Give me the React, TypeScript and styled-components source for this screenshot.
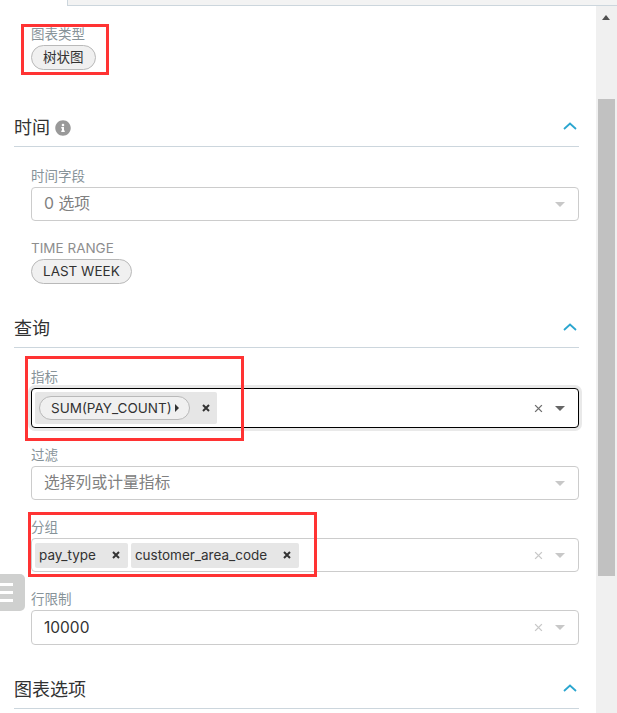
import * as React from 'react';
import styled, { createGlobalStyle } from 'styled-components';
import { FaInfoCircle } from 'react-icons/fa';

const GlobalStyle = createGlobalStyle`
    html, body {
        margin: 0;
        height: 100%;
        background: #fff;
        overflow: hidden;
    }
    body {
        font-family: Inter, "Noto Sans CJK SC", sans-serif;
        color: #323232;
    }
`;

const Cross = ({ size = 8, width = 2 }: { size?: number; width?: number }): JSX.Element => <svg width={size} height={size} viewBox="0 0 8 8">
    <path d="M1 1 L7 7 M7 1 L1 7" stroke="currentColor" strokeWidth={width} fill="none" />
</svg>;

const Section = ({ title, info, children }: { title: string; info?: boolean; children?: React.ReactNode }): JSX.Element => <SectionBlock>
    <SectionHead>
        <SectionTitle>
            {title}
            {info && <InfoIcon><FaInfoCircle size={16} /></InfoIcon>}
        </SectionTitle>
        <Chevron width="14" height="8" viewBox="0 0 14 8">
            <path d="M1 7 L7 1.5 L13 7" stroke="#2ba6cf" strokeWidth="1.8" fill="none" />
        </Chevron>
    </SectionHead>
    {children && <Controls>{children}</Controls>}
</SectionBlock>;

const SelectIndicators = ({ focused, clearable }: { focused?: boolean; clearable?: boolean }): JSX.Element => <Indicators>
    {clearable && <ClearIcon $focused={focused}><Cross size={9} width={1.2} /></ClearIcon>}
    <Caret $focused={focused} />
</Indicators>;

export default function App(): JSX.Element {
    return <Page>
        <GlobalStyle />
        <TopTab />
        <Body>
            <Panel>
                <ChartType>
                    <Label>图表类型</Label>
                    <Pill>树状图</Pill>
                    <Highlight $left={-10} $top={-1} $width={88} $height={51} />
                </ChartType>
                <Section title="时间" info>
                    <Field>
                        <Label>时间字段</Label>
                        <Select>
                            <Placeholder>0 选项</Placeholder>
                            <SelectIndicators />
                        </Select>
                    </Field>
                    <Field>
                        <Label $muted>TIME RANGE</Label>
                        <Pill>LAST WEEK</Pill>
                    </Field>
                </Section>
                <Section title="查询">
                    <Field>
                        <Label>指标</Label>
                        <Select $focused>
                            <Tag $tall>
                                <MetricPill>SUM(PAY_COUNT)<MetricArrow /></MetricPill>
                                <TagRemove $tight><Cross /></TagRemove>
                            </Tag>
                            <SelectIndicators focused clearable />
                        </Select>
                        <Highlight $left={-6} $top={-12} $width={219} $height={85} />
                    </Field>
                    <Field>
                        <Label>过滤</Label>
                        <Select>
                            <Placeholder>选择列或计量指标</Placeholder>
                            <SelectIndicators />
                        </Select>
                    </Field>
                    <Field>
                        <Label>分组</Label>
                        <Select>
                            <Tag>pay_type<TagRemove><Cross /></TagRemove></Tag>
                            <Tag>customer_area_code<TagRemove><Cross /></TagRemove></Tag>
                            <SelectIndicators clearable />
                        </Select>
                        <Highlight $left={-3} $top={-6} $width={289} $height={65} />
                    </Field>
                    <Field>
                        <Label>行限制</Label>
                        <Select $tall>
                            <Value>10000</Value>
                            <SelectIndicators clearable />
                        </Select>
                    </Field>
                </Section>
                <Section title="图表选项" />
                <MenuToggle>
                    <span /><span /><span />
                </MenuToggle>
            </Panel>
            <Scrollbar>
                <ScrollUp />
                <ScrollThumb />
            </Scrollbar>
        </Body>
    </Page>;
}

const Page = styled.div`
    display: flex;
    flex-direction: column;
    width: 617px;
    height: 713px;
    overflow: hidden;
`;

const TopTab = styled.div`
    flex: none;
    height: 5px;
    margin-left: 67px;
    background: #f3f3f3;
    border-left: 1px solid #ccd6dd;
    border-bottom: 1px solid #ccd6dd;
`;

const Body = styled.div`
    display: flex;
    flex: 1;
    min-height: 0;
`;

const Panel = styled.div`
    position: relative;
    width: 596px;
    flex: none;
`;

const Scrollbar = styled.div`
    width: 21px;
    flex: none;
    background: #f0f0f0;
    padding-left: 2px;
    box-sizing: border-box;
`;

const ScrollUp = styled.div`
    width: 0;
    height: 0;
    margin: 9px 0 0 4px;
    border-left: 4.5px solid transparent;
    border-right: 4.5px solid transparent;
    border-bottom: 5px solid #505050;
`;

const ScrollThumb = styled.div`
    width: 17px;
    height: 477px;
    margin-top: 79px;
    background: #c1c1c1;
`;

const ChartType = styled.div`
    position: relative;
    width: 200px;
    margin: 19px 0 0 31px;
    padding-bottom: 13px;
    display: flex;
    flex-direction: column;
`;

const SectionBlock = styled.div`
    margin: 27px 17px 0 14px;
`;

const SectionHead = styled.div`
    display: flex;
    align-items: center;
    justify-content: space-between;
    height: 36px;
    margin-top: -1px;
    padding: 0 2px 1px 0;
    border-bottom: 1px solid #ccd6dd;
`;

const SectionTitle = styled.div`
    display: flex;
    align-items: center;
    padding-top: 2px;
    font-size: 18px;
    line-height: 26px;
    color: #323232;
`;

const Chevron = styled.svg`
    margin-bottom: 2px;
`;

const InfoIcon = styled.span`
    display: flex;
    margin-left: 5px;
    color: #999;
`;

const Controls = styled.div`
    display: flex;
    flex-direction: column;
    gap: 18px;
    padding: 20px 0 0 17px;
`;

const Field = styled.div`
    position: relative;
    display: flex;
    flex-direction: column;
`;

const Label = styled.div<{ $muted?: boolean }>`
    font-size: 13.5px;
    line-height: 18px;
    height: 20px;
    color: ${p => p.$muted ? '#8e8e8e' : '#879399'};
`;

const Pill = styled.div`
    align-self: flex-start;
    height: 23px;
    line-height: 23px;
    padding: 0 11px;
    font-size: 13.5px;
    color: #323232;
    background: #f0f0f0;
    border: 1px solid #b9b9b9;
    border-radius: 13px;
`;

const Select = styled.div<{ $focused?: boolean; $tall?: boolean }>`
    display: flex;
    align-items: center;
    gap: 3px;
    box-sizing: border-box;
    height: ${p => p.$focused ? 40 : p.$tall ? 35 : 34}px;
    padding: 0 0 0 3px;
    background: #fff;
    border: 1px solid ${p => p.$focused ? '#000' : '#ccc'};
    border-radius: 4px;
    box-shadow: ${p => p.$focused ? '0 0 0 3px #e9e9e9' : 'none'};
`;

const Placeholder = styled.div`
    padding: 0 0 3px 9px;
    font-size: 15.8px;
    color: #808080;
`;

const Value = styled.div`
    padding-left: 9px;
    font-size: 15.5px;
    color: #323232;
`;

const Tag = styled.div<{ $tall?: boolean }>`
    display: flex;
    align-items: center;
    height: ${p => p.$tall ? 32 : 25}px;
    padding-left: 4px;
    font-size: 13.5px;
    color: #323232;
    background: #e6e6e6;
    border-radius: 2px;
`;

const TagRemove = styled.span<{ $tight?: boolean }>`
    display: flex;
    margin: 0 ${p => p.$tight ? 7 : 8}px 0 ${p => p.$tight ? 12 : 16}px;
    color: #333;
`;

const MetricPill = styled.div`
    display: flex;
    align-items: center;
    height: 22px;
    padding: 0 10px 0 11px;
    background: #f0f0f0;
    border: 1px solid #b9b9b9;
    border-radius: 12px;
`;

const MetricArrow = styled.span`
    width: 0;
    height: 0;
    margin-left: 3px;
    border-top: 4px solid transparent;
    border-bottom: 4px solid transparent;
    border-left: 4px solid #323232;
`;

const Indicators = styled.div`
    display: flex;
    align-items: center;
    margin-left: auto;
    padding-right: 13px;
`;

const ClearIcon = styled.span<{ $focused?: boolean }>`
    display: flex;
    margin-right: 12px;
    color: ${p => p.$focused ? '#6e6e6e' : '#c8c8c8'};
`;

const Caret = styled.span<{ $focused?: boolean }>`
    width: 0;
    height: 0;
    border-left: 5px solid transparent;
    border-right: 5px solid transparent;
    border-top: 5px solid ${p => p.$focused ? '#666' : '#c8c8c8'};
`;

const Highlight = styled.div<{ $left: number; $top: number; $width: number; $height: number }>`
    position: absolute;
    left: ${p => p.$left}px;
    top: ${p => p.$top}px;
    width: ${p => p.$width}px;
    height: ${p => p.$height}px;
    box-sizing: border-box;
    border: 3px solid #ff3333;
    pointer-events: none;
`;

const MenuToggle = styled.div`
    position: absolute;
    left: 0;
    top: 568px;
    width: 25px;
    height: 37px;
    padding-right: 12px;
    box-sizing: border-box;
    display: flex;
    flex-direction: column;
    justify-content: center;
    gap: 5px;
    background: #cfd0cf;
    border-radius: 0 5px 5px 0;

    span {
        height: 3px;
        background: #fff;
    }
`;
